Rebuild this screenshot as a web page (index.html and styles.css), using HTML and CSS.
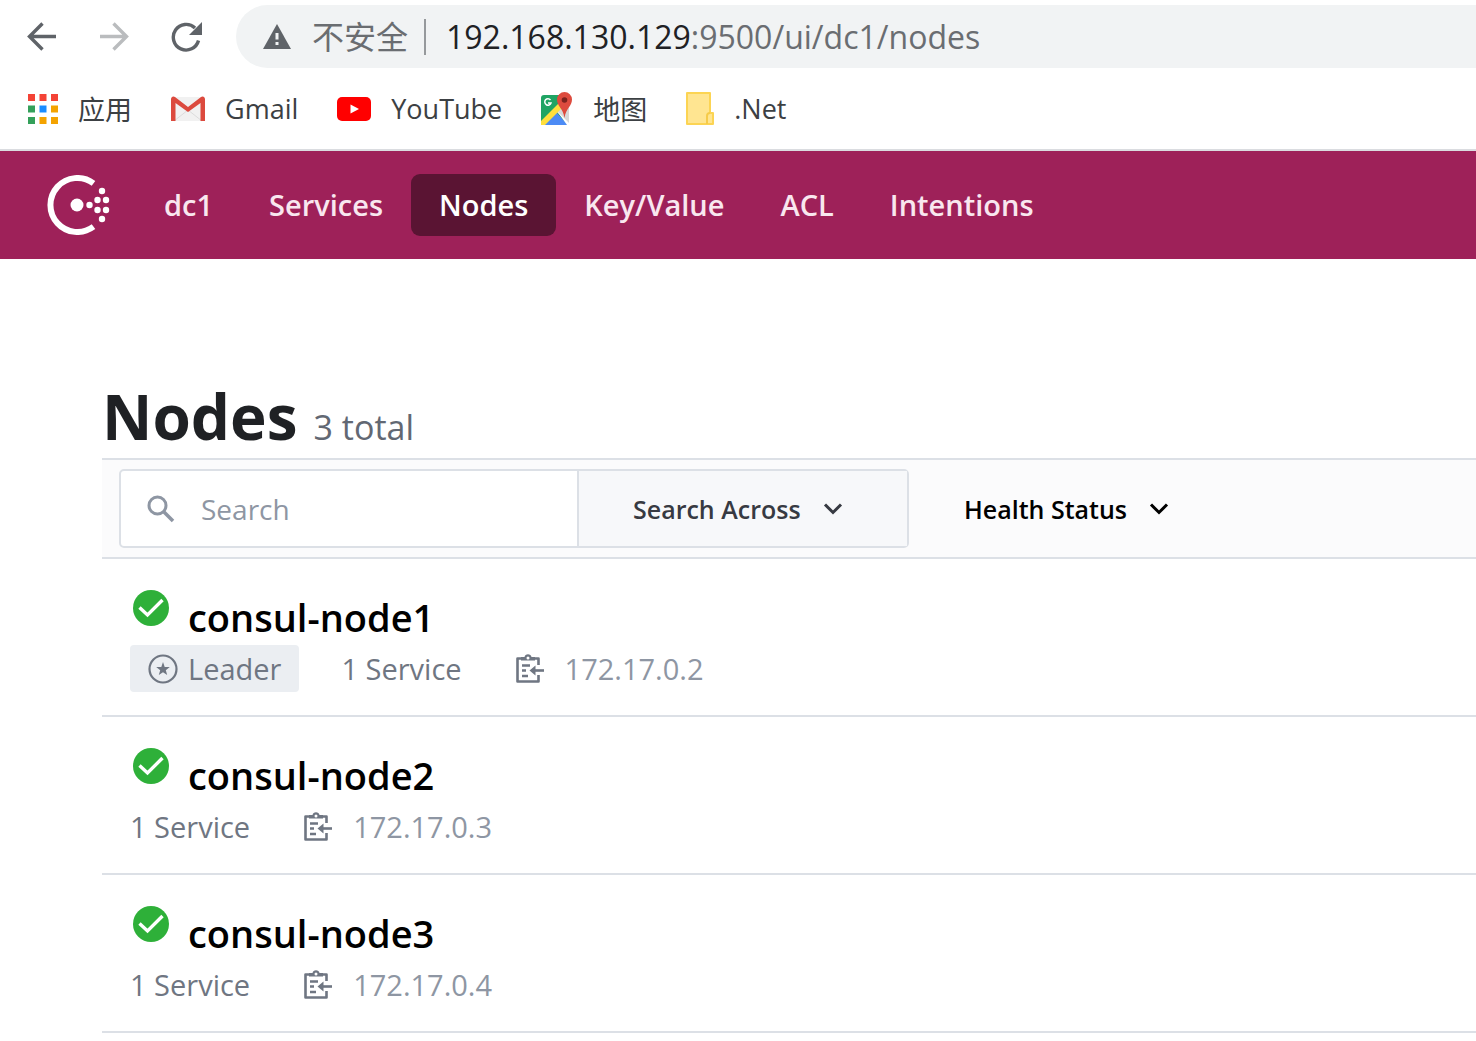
FILE: index.html
```html
<!DOCTYPE html>
<html lang="zh-CN">
<head>
<meta charset="utf-8">
<meta name="viewport" content="width=device-width, initial-scale=1">
<title>Nodes - Consul</title>
<link rel="stylesheet" href="styles.css">
</head>
<body>
<svg class="sprite" aria-hidden="true">
  <symbol id="check" viewBox="0 0 36 36"><circle cx="18" cy="18" r="18" fill="#2eb039"/><path d="M6.500 17.500l8 7.500L29.500 10" fill="none" stroke="#fff" stroke-width="3.400"/></symbol>
  <symbol id="clip" viewBox="0 0 30 30"><path d="M23.500 11V4.500H2.500v23h21V21" fill="none" stroke="currentColor" stroke-width="2.600" stroke-linejoin="round"/><path d="M6 3h3.500a3.600 3.600 0 0 1 7 0H20v3.500H6z" fill="currentColor"/><circle cx="13" cy="4" r="1.500" fill="#fff"/><path d="M7 11.500h8M7 16.500h4M7 22h6" stroke="currentColor" stroke-width="2.400"/><path d="M29 16.500H18" stroke="currentColor" stroke-width="2.600"/><path d="M14.500 16.500l6-5v10z" fill="currentColor"/></symbol>
  <symbol id="chevron" viewBox="0 0 20 14"><path d="M2 2.500l8 8 8-8" fill="none" stroke="currentColor" stroke-width="3"/></symbol>
</svg>

<div class="browser">
  <div class="toolbar">
    <button class="tool" aria-label="Back"><svg width="30" height="30" viewBox="0 0 30 30"><path d="M29 14.500H3M15.500 1.500L2.500 14.500l13 13" fill="none" stroke="#5f6368" stroke-width="3.400"/></svg></button>
    <button class="tool" aria-label="Forward"><svg width="30" height="30" viewBox="0 0 30 30"><path d="M1 14.500h26M14.500 1.500l13 13-13 13" fill="none" stroke="#babcbe" stroke-width="3.400"/></svg></button>
    <button class="tool" aria-label="Reload"><svg width="32" height="30" viewBox="0 0 32 30"><path d="M27.500 18.500A12.800 12.800 0 1 1 24 6" fill="none" stroke="#5f6368" stroke-width="3.400"/><path d="M31 0v13H18z" fill="#5f6368"/></svg></button>
    <div class="omnibox">
      <svg width="28" height="25" viewBox="0 0 28 25"><path d="M14 0l14 25H0z" fill="#5f6368"/><path d="M12.500 9h3v6.500h-3zM12.500 18h3v3h-3z" fill="#f1f3f4"/></svg>
      <span class="insecure">不安全</span>
      <span class="url"><b>192.168.130.129</b>:9500/ui/dc1/nodes</span>
    </div>
  </div>
  <nav class="bookmarks" aria-label="Bookmarks">
    <a href="#"><svg width="30" height="30" viewBox="0 0 30 30"><path d="M0 0h7v7H0zM11.500 0h7v7h-7zM23 0h7v7h-7z" fill="#f44336"/><path d="M0 11.500h7v7H0zM0 23h7v7H0z" fill="#34a05a"/><path d="M11.500 11.500h7v7h-7z" fill="#1a8cff"/><path d="M23 11.500h7v7h-7zM11.500 23h7v7h-7zM23 23h7v7h-7z" fill="#f4a300"/></svg>应用</a>
    <a href="#"><svg width="34" height="26" viewBox="0 0 34 26"><path d="M3 1h28v24H3z" fill="#f1f1f1"/><path d="M3 25l14-11 14 11" fill="none" stroke="#dcdcdc"/><path d="M0 3a2.500 2.500 0 0 1 4-2l13 10L30 1a2.500 2.500 0 0 1 4 2v22h-4.500V7L17 16 4.500 7v18H0z" fill="#dc4a3e"/></svg>Gmail</a>
    <a href="#"><svg width="34" height="24" viewBox="0 0 34 24"><rect width="34" height="24" rx="5" fill="#f00"/><path d="M13.500 7.500v9l8.500-4.500z" fill="#fff"/></svg>YouTube</a>
    <a href="#"><svg width="32" height="34" viewBox="0 0 32 34"><rect y="3" width="28" height="30" rx="3" fill="#1fa463"/><path d="M28 12v21L14 18z" fill="#d8d8d8"/><path d="M3 33l12-13 12 13z" fill="#4c8bf5"/><path d="M16 19l12 12v2h-2z" fill="#fff"/><path d="M0 33v-4L18 11l2 6L4 33z" fill="#ffdf3d"/><path d="M9.500 8a3.200 3.200 0 1 0 .5 3H7" fill="none" stroke="#fff" stroke-width="1.500"/><path d="M23.500 0a7.500 7.500 0 0 1 7.500 7.500c0 7-6 8-7.500 18.500C22 15.500 16 14.500 16 7.500A7.500 7.500 0 0 1 23.500 0z" fill="#dd4b3e"/><circle cx="23.500" cy="8" r="2.800" fill="#7b231e"/></svg>地图</a>
    <a href="#"><svg width="28" height="34" viewBox="0 0 28 34"><path d="M1 1h23v20h3v11H1z" fill="#ffe591" stroke="#fcd453" stroke-width="2" stroke-linejoin="round"/><path d="M21 32v-8q0-3 3-3" fill="none" stroke="#f6cb4a" stroke-width="2"/></svg>.Net</a>
  </nav>
</div>

<header class="consul-header">
  <a class="logo" href="#" aria-label="Consul"><svg width="63" height="60" viewBox="0 0 63 60"><path d="M46.500 8.300A27 27 0 1 0 46.500 51.700" fill="none" stroke="#fff" stroke-width="6"/><g fill="#fff"><circle cx="30" cy="30" r="6.500"/><circle cx="42.500" cy="30" r="3.200"/><circle cx="50.500" cy="25" r="3.200"/><circle cx="50.500" cy="35" r="3.200"/><circle cx="59" cy="25" r="3.200"/><circle cx="59" cy="35" r="3.200"/><circle cx="55" cy="16" r="3.200"/><circle cx="55" cy="44" r="3.200"/></g></svg></a>
  <nav class="main-nav" aria-label="Main">
    <a href="#">dc1</a>
    <a href="#">Services</a>
    <a class="active" href="#" aria-current="page">Nodes</a>
    <a href="#">Key/Value</a>
    <a href="#">ACL</a>
    <a href="#">Intentions</a>
  </nav>
</header>

<main>
  <h1>Nodes <em>3 total</em></h1>
  <form class="filter-bar">
    <div class="search">
      <label for="search"><svg width="28" height="28" viewBox="0 0 28 28"><title>Search</title><circle cx="10.500" cy="10.500" r="8.500" fill="none" stroke="#8e96a3" stroke-width="3"/><path d="M16.500 16.500l9.500 9.500" stroke="#8e96a3" stroke-width="3.600"/></svg></label>
      <input id="search" type="search" placeholder="Search">
      <button type="button" class="across">Search Across <svg width="20" height="14"><use href="#chevron"/></svg></button>
    </div>
    <button type="button" class="status">Health Status <svg width="20" height="14"><use href="#chevron"/></svg></button>
  </form>
  <ul class="nodes">
    <li>
      <h2><svg width="36" height="36"><use href="#check"/></svg><a href="#">consul-node1</a></h2>
      <div class="meta">
        <span class="leader"><svg width="30" height="30" viewBox="0 0 30 30"><circle cx="15" cy="15" r="13.500" fill="none" stroke="currentColor" stroke-width="2.200"/><path d="M15 8l1.700 4.900 5.100.1-4 3.200 1.400 4.900L15 18.300l-4.200 2.800 1.400-4.900-4-3.200 5.100-.1z" fill="currentColor"/></svg>Leader</span>
        <span>1 Service</span>
        <span class="address"><svg width="30" height="30"><use href="#clip"/></svg>172.17.0.2</span>
      </div>
    </li>
    <li>
      <h2><svg width="36" height="36"><use href="#check"/></svg><a href="#">consul-node2</a></h2>
      <div class="meta">
        <span>1 Service</span>
        <span class="address"><svg width="30" height="30"><use href="#clip"/></svg>172.17.0.3</span>
      </div>
    </li>
    <li>
      <h2><svg width="36" height="36"><use href="#check"/></svg><a href="#">consul-node3</a></h2>
      <div class="meta">
        <span>1 Service</span>
        <span class="address"><svg width="30" height="30"><use href="#clip"/></svg>172.17.0.4</span>
      </div>
    </li>
  </ul>
</main>
</body>
</html>
```
FILE: styles.css
```css
* { box-sizing: border-box; }
body {
  margin: 0;
  background: #fff;
  color: #000;
  font-family: "Open Sans", "Noto Sans CJK SC", sans-serif;
  font-size: 29px;
}
a { color: inherit; text-decoration: none; }
button { border: 0; background: none; padding: 0; font: inherit; color: inherit; }
svg { display: block; flex: none; }
.sprite { position: absolute; width: 0; height: 0; }

/* Browser chrome */
.browser { border-bottom: 2px solid #dadce0; }
.toolbar { display: flex; align-items: center; padding: 5px 0 0 27px; }
.tool { width: 32px; margin-right: 40px; }
.omnibox {
  flex: 1;
  display: flex;
  align-items: center;
  height: 63px;
  margin-left: -7px;
  padding-left: 27px;
  border-radius: 32px 0 0 32px;
  background: #f1f3f4;
  color: #6a6d71;
  font-size: 32px;
  white-space: nowrap;
}
.insecure {
  margin: 0 20px 0 21px;
  padding-right: 16px;
  border-right: 2px solid #96999c;
  line-height: 36px;
}
.url b { color: #202124; font-weight: 400; }
.bookmarks {
  display: flex;
  align-items: center;
  gap: 39px;
  height: 81px;
  padding-left: 28px;
  color: #3c4043;
  font-size: 27px;
}
.bookmarks a { display: flex; align-items: center; gap: 20px; }

/* Consul header */
.consul-header {
  display: flex;
  align-items: center;
  height: 108px;
  padding-left: 47px;
  background: #9e2159;
}
.main-nav { display: flex; margin-left: 26px; }
.main-nav a {
  padding: 0 28px;
  border-radius: 9px;
  color: #f9e7ef;
  font-weight: 600;
  line-height: 62px;
}
.main-nav .active { background: #5a1433; color: #fff; }

/* Page */
main { padding: 119px 0 0 102px; }
h1 {
  margin: 0;
  padding-bottom: 4px;
  color: #1f2124;
  font-size: 62px;
  font-weight: 700;
  line-height: 76px;
}
h1 em {
  color: #626873;
  font-size: 34px;
  font-style: normal;
  font-weight: 400;
  line-height: 36px;
}
.filter-bar {
  display: flex;
  align-items: center;
  height: 101px;
  padding-left: 17px;
  border: solid #dce0e6;
  border-width: 2px 0;
  background: #fbfbfc;
  font-size: 25px;
  font-weight: 600;
}
.search {
  display: flex;
  align-items: center;
  width: 790px;
  height: 79px;
  border: 2px solid #dce0e6;
  border-radius: 5px;
  background: #fff;
}
.search label { padding: 0 26px; }
.search input {
  flex: 1;
  min-width: 0;
  height: 100%;
  padding: 0;
  border: 0;
  outline: 0;
  background: none;
  font: 400 28px "Open Sans", sans-serif;
}
.search input::placeholder { color: #8e96a3; }
.across, .status { display: flex; align-items: center; gap: 22px; }
.across {
  width: 330px;
  height: 100%;
  padding-left: 54px;
  border-left: 2px solid #dce0e6;
  background: #f7f8fa;
  color: #373a42;
}
.status { margin-left: 55px; }

.nodes { margin: 0; padding: 0; list-style: none; }
.nodes li { height: 158px; padding: 31px 28px 0; border-bottom: 2px solid #dce0e6; }
h2 { display: flex; gap: 19px; margin: 0 0 0 3px; font-size: 38px; font-weight: 600; line-height: 54px; }
.meta { display: flex; align-items: center; gap: 42px; height: 49px; color: #6f7682; }
.meta span { display: flex; align-items: center; }
.meta .leader { gap: 10px; height: 47px; padding: 0 18px; border-radius: 4px; background: #ebeef2; }
.meta .address { gap: 20px; margin-left: 11px; color: #8e96a3; }
.address svg { color: #6f7682; }
```
